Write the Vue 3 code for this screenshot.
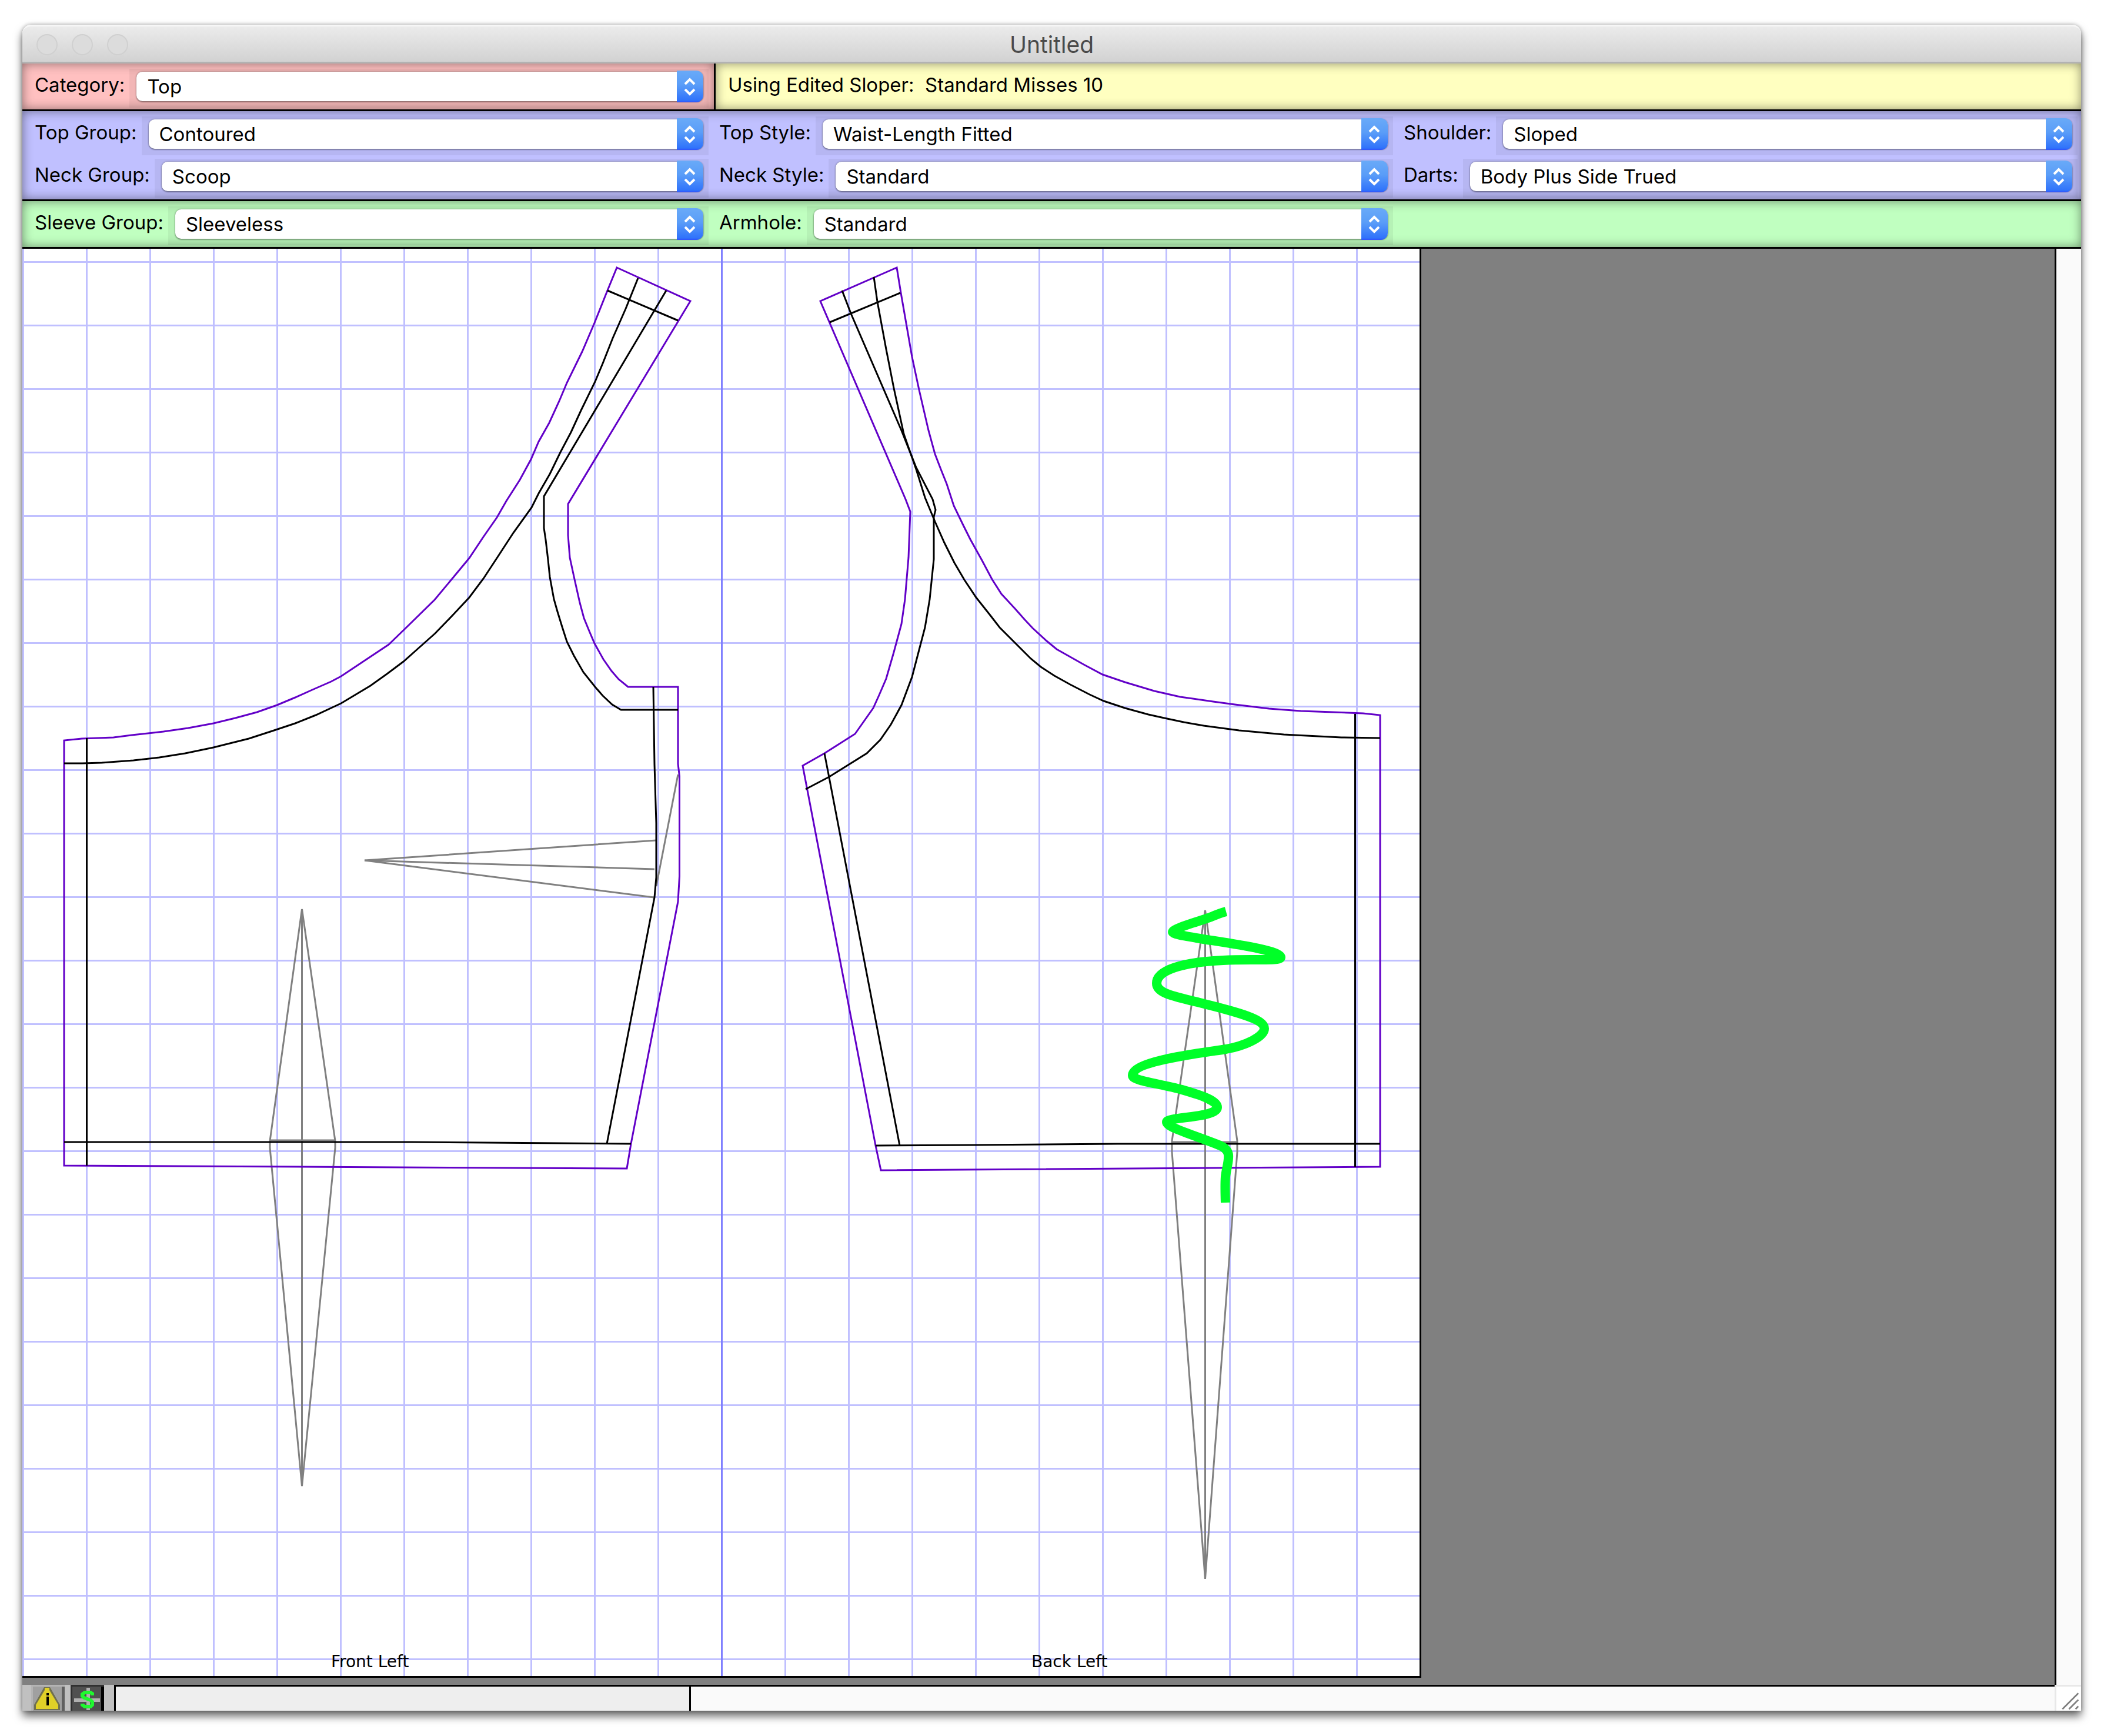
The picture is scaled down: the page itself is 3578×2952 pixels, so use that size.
<script setup>
import { reactive } from 'vue'

const category = reactive({ id: 'category', label: 'Category:', value: 'Top' })

const bodyMenus = reactive([
  { id: 'top-group', label: 'Top Group:', value: 'Contoured' },
  { id: 'top-style', label: 'Top Style:', value: 'Waist-Length Fitted' },
  { id: 'shoulder', label: 'Shoulder:', value: 'Sloped' },
  { id: 'neck-group', label: 'Neck Group:', value: 'Scoop' },
  { id: 'neck-style', label: 'Neck Style:', value: 'Standard' },
  { id: 'darts', label: 'Darts:', value: 'Body Plus Side Trued' }
])

const sleeveMenus = reactive([
  { id: 'sleeve-group', label: 'Sleeve Group:', value: 'Sleeveless' },
  { id: 'armhole', label: 'Armhole:', value: 'Standard' }
])

const bands = [
  { name: 'body', menus: bodyMenus },
  { name: 'sleeve', menus: sleeveMenus }
]

const columns = Array.from({ length: 22 }, (_, i) => 39.5 + i * 108)
const rows = Array.from({ length: 23 }, (_, i) => 445.5 + i * 108)

// Cutting lines, seam allowance included
const cutting = [
  '1049,455 1174,512 966,857 966,910 969,948 977,985 986,1025 993,1051 1002,1073 1011,1094 1026,1121 1040,1141 1052,1155 1068,1168 1153,1168 1153,1299 1155.5,1320 1155.5,1490 1153,1533 1073,1945 1066,1987 109,1982 109,1259 139,1256 193,1254 224,1250 278,1244 320,1238 363,1230 400,1221 437,1211 471,1199 502,1186 531,1173 563,1159 580,1150 616,1126 661,1096 691,1067 739,1020 769,984 798,949 822,913 845,880 861,852 884,816 903,781 916,751 934,719 951,682 964,651 990,598 1011,549 1033,494',
  '1395,512 1525,455 1532,498 1551,607 1563,663 1579,732 1590,772 1600,798 1610,823 1622,860 1638,893 1650,917 1670,953 1687,985 1703,1010 1727,1036 1742,1053 1756,1068 1780,1090 1797,1104 1820,1117 1843,1130 1875,1147 1913,1160 1963,1175 2007,1185 2063,1193 2100,1198 2158,1205 2212,1209 2318,1213 2347,1216 2347,1984 1498,1990 1489,1948 1365,1302 1402,1281 1454,1248 1485,1204 1495,1182 1507,1154 1520,1109 1533,1061 1539,1019 1545,948 1548,870 1540,849'
]

// Stitching lines
const stitching = [
  '1085,473 1064,525 1042,575 1025,618 1012,649 988,698 971,735 953,769 935,806 916,839 904,863 873,906 845,949 822,984 798,1016 769,1047 740,1077 713,1101 686,1125 658,1146 630,1166 580,1196 537,1216 502,1230 463,1243 423,1256 363,1271 315,1281 271,1288 227,1293 173,1297 140,1298 109,1298',
  '1133,494 925,844 925,898 928,918 932,952 935,981 942,1019 948,1040 956,1066 964,1091 976,1115 992,1143 1012,1168 1025,1183 1041,1198 1056,1207 1153,1207',
  '1033,494 1153,545',
  '1111,1168 1113,1300 1116,1400 1116,1492 1113,1526 1032,1945',
  '109,1942 700,1942 1073,1945',
  '147.5,1255 147.5,1982',
  '1486,471 1492,513 1507,594 1520,660 1537,738 1558,798 1573,846 1590,887 1606,923 1623,957 1640,986 1660,1016 1683,1045 1700,1067 1727,1094 1753,1120 1770,1134 1793,1149 1820,1164 1853,1181 1877,1192 1913,1204 1953,1215 1980,1221 2013,1228 2047,1234 2107,1242 2183,1249 2281,1254 2347,1255',
  '1432,494 1447,533 1533,732 1558,795 1586,849 1591,867 1588,879 1588,951 1581,1019 1573,1067 1551,1151 1533,1199 1515,1232 1497,1258 1474,1281 1410,1321 1370,1342',
  '1411,548 1531,498',
  '1402,1281 1410,1322 1530,1948',
  '1489,1948 1660,1947 1900,1945 2347,1945',
  '2304.5,1214 2304.5,1984'
]

const darts = [
  '1116,1429 620,1463 1113,1478',
  '620,1463 1112,1526',
  '1153,1317 1116,1507',
  '513.5,1546 459,1940 459,1952 513.5,2527 570,1952 570,1940 513.5,1546 513.5,2527',
  '459,1939 570,1939',
  '2049.5,1548 1993,1940 1993,1959 2049.5,2685 2104,1959 2104,1940 2049.5,1548 2049.5,2685',
  '1993,1942 2104,1942'
]

const scribble =
  'M2085 1550 C2074 1553 2067 1556 2060 1559 C2035 1568 1994 1579 1994 1585 C1994 1594 2178 1610 2178 1628 C2178 1635 2130 1630 2080 1633 C2010 1636 1967 1650 1967 1672 C1967 1690 2000 1695 2040 1705 C2090 1718 2150 1731 2150 1749 C2150 1763 2118 1778 2085 1784 C2040 1791 1926 1804 1926 1829 C1926 1838 1975 1843 2010 1853 C2045 1863 2070 1872 2070 1883 C2070 1901 1984 1899 1984 1908 C1984 1917 2030 1930 2075 1948 C2098 1958 2087 1975 2084 2001 Q2083 2015 2084 2045'
</script>

<template>
  <main class="window">
    <header class="titlebar">
      <div class="lights">
        <button class="light" type="button" aria-label="Close"></button>
        <button class="light" type="button" aria-label="Minimize"></button>
        <button class="light" type="button" aria-label="Zoom"></button>
      </div>
      <h1 class="title">Untitled</h1>
    </header>

    <section class="top-band">
      <div class="panel category">
        <div class="field">
          <label class="label" :for="category.id">{{ category.label }}</label>
          <div class="shade">
            <div class="popup">
              <select :id="category.id" v-model="category.value" class="select">
                <option>{{ category.value }}</option>
              </select>
              <svg class="cap" viewBox="0 0 45 54" aria-hidden="true">
                <path d="M14 23 L22 15 L30 23 M14 32 L22 40 L30 32" />
              </svg>
            </div>
          </div>
        </div>
      </div>
      <div class="panel sloper">
        <p class="status-text">Using Edited Sloper:&nbsp; Standard Misses 10</p>
      </div>
    </section>

    <section v-for="band in bands" :key="band.name" class="panel band" :class="band.name">
      <div v-for="menu in band.menus" :key="menu.id" class="field">
        <label class="label" :for="menu.id">{{ menu.label }}</label>
        <div class="shade">
          <div class="popup">
            <select :id="menu.id" v-model="menu.value" class="select">
              <option>{{ menu.value }}</option>
            </select>
            <svg class="cap" viewBox="0 0 45 54" aria-hidden="true">
              <path d="M14 23 L22 15 L30 23 M14 32 L22 40 L30 32" />
            </svg>
          </div>
        </div>
      </div>
    </section>

    <div class="work">
      <div class="desk">
        <svg class="paper" viewBox="38 423 2376 2427" role="img" aria-label="Sewing pattern">
          <g class="grid">
            <line v-for="x in columns" :key="'c' + x" :x1="x" :x2="x" y1="423" y2="2850" />
            <line v-for="y in rows" :key="'r' + y" x1="38" x2="2414" :y1="y" :y2="y" />
            <line class="center" x1="1227.5" x2="1227.5" y1="423" y2="2850" />
          </g>
          <g class="dart"><polyline v-for="p in darts" :key="p" :points="p" /></g>
          <g class="cut"><polygon v-for="p in cutting" :key="p" :points="p" /></g>
          <g class="stitch"><polyline v-for="p in stitching" :key="p" :points="p" /></g>
          <path class="scribble" :d="scribble" />
          <text class="caption" x="563" y="2835">Front Left</text>
          <text class="caption" x="1754" y="2835">Back Left</text>
        </svg>
      </div>
      <div class="vscroll"></div>
    </div>

    <footer class="statusbar">
      <div class="tools">
        <button class="tool warn" type="button" aria-label="Warnings">
          <svg viewBox="0 0 57 42" aria-hidden="true">
            <path class="sign-edge" d="M22 3 H32 L49 33 V42 H5 V33 Z" />
            <path class="sign" d="M23 4 H31 V8 L46 33 V40 H8 V33 L23 8 Z" />
            <path d="M26 13 h4 v4 h-4 z M26 19 h4 v15 h-4 z" />
          </svg>
        </button>
        <button class="tool money" type="button" aria-label="Alignment">
          <svg viewBox="0 0 57 42" aria-hidden="true">
            <path class="bars" d="M27 4 h6 v38 h-6 z M6 22 h44 v6 h-44 z" />
            <path class="dollar" d="M37 17 V14 L34 12 H24 L20 15 V18 L23 21 L34 25 L37 28 V33 L34 36 H24 L20 33 V31" />
          </svg>
        </button>
      </div>
      <div class="message"></div>
      <div class="hscroll"></div>
      <svg class="grip" viewBox="0 0 45 44" aria-hidden="true">
        <path d="M11 41 L40 12 M23 41 L40 24 M35 41 L40 36" />
      </svg>
    </footer>
  </main>
</template>

<style>
body {
  margin: 0;
  background: #fff;
}
</style>

<style scoped>
.window {
  margin: 42px 39px 43px 38px;
  display: flex;
  flex-direction: column;
  border-radius: 15px 15px 0 0;
  box-shadow: 0 9px 15px rgba(0, 0, 0, 0.6), 0 0 6px rgba(0, 0, 0, 0.3);
  font-family: Inter, "Noto Sans", sans-serif;
  font-size: 33px;
  color: #000;
}

.titlebar {
  display: grid;
  grid-template-columns: 1fr auto 1fr;
  align-items: center;
  height: 66px;
  box-sizing: border-box;
  padding-top: 2px;
  border-top: 3px solid #f6f6f6;
  border-bottom: 3px solid #b2b2b2;
  border-radius: 15px 15px 0 0;
  background: linear-gradient(#ebebeb, #d2d2d2);
}

.lights {
  display: flex;
  gap: 24px;
  padding-left: 24px;
}

.light {
  width: 36px;
  height: 36px;
  padding: 0;
  border: 2px solid #d0d0d0;
  border-radius: 50%;
  background: #dcdcdc;
}

.title {
  margin: 0;
  font-size: 39px;
  font-weight: 400;
  line-height: 54px;
  color: #4a4a4a;
}

.panel {
  border-bottom: 3px solid #000;
  box-shadow: inset 0 0 18px rgba(0, 0, 0, 0.45);
}

.top-band {
  display: grid;
  grid-template-columns: calc((100% - 9px) / 3 + 15px) 1fr;
}

.category {
  padding: 9px 9px 3px 3px;
  border-right: 3px solid #000;
  background: #ffc0c0;
}

.sloper {
  padding: 9px 21px 3px;
  background: #ffffc0;
}

.status-text {
  margin: 0;
  line-height: 54px;
}

.band {
  display: grid;
  grid-template-columns: repeat(3, minmax(0, 1fr));
  row-gap: 6px;
  padding: 9px 6px 3px 3px;
}

.body {
  background: #c0c0ff;
}

.sleeve {
  background: #c0ffc0;
}

.field {
  display: flex;
  padding-left: 18px;
}

.label {
  margin-right: 8px;
  line-height: 54px;
  white-space: nowrap;
}

.shade {
  flex: 1;
  min-width: 0;
  padding: 3px 9px 9px 12px;
  background: rgba(0, 0, 0, 0.05);
}

.popup {
  position: relative;
  display: flex;
  align-items: center;
  height: 54px;
}

.select {
  appearance: none;
  width: 100%;
  height: 50px;
  padding: 0 57px 0 18px;
  border: 0;
  border-radius: 10px;
  background: #fff;
  box-shadow: 0 0 3px rgba(0, 0, 0, 0.45), 0 2px 2px rgba(0, 0, 0, 0.25);
  font: inherit;
  color: #000;
}

.cap {
  position: absolute;
  top: 0;
  right: 0;
  width: 45px;
  height: 54px;
  border-radius: 0 12px 12px 0;
  background: linear-gradient(#69aaf8, #5a9df8 45%, #3073fb 94%, #3050fb);
  pointer-events: none;
}

.cap path {
  fill: none;
  stroke: #fff;
  stroke-width: 4;
}

.work {
  display: flex;
}

.desk {
  flex: 1;
  min-width: 0;
  overflow: hidden;
  padding-bottom: 12px;
  background: #808080;
}

.paper {
  display: block;
  width: 2376px;
  height: 2427px;
  border: solid #000;
  border-width: 0 3px 3px 0;
  background: #fff;
}

.vscroll {
  width: 42px;
  border-left: 3px solid #000;
  background: #fafafa;
}

.grid line {
  stroke: #c0c0ff;
  stroke-width: 3;
}

.grid .center {
  stroke: #8080ff;
}

.cut,
.stitch,
.dart {
  fill: none;
  stroke-width: 3;
}

.cut {
  stroke: #6200c8;
}

.stitch {
  stroke: #000;
}

.dart {
  stroke: #808080;
}

.scribble {
  fill: none;
  stroke: #00ff28;
  stroke-width: 16;
}

.caption {
  font-family: "DejaVu Sans", sans-serif;
  font-size: 28px;
  fill: #000;
}

.statusbar {
  display: flex;
  height: 44px;
}

.tools {
  display: flex;
  gap: 10px;
  width: 156px;
  box-sizing: border-box;
  padding-left: 15px;
  background: #c0c0c0;
}

.tool {
  width: 57px;
  height: 44px;
  padding: 0;
  border: 0;
}

.tool svg {
  display: block;
  width: 57px;
  height: 42px;
}

.warn {
  background: #a0a0a0;
  box-shadow: inset 3px 3px #b4b4b4, inset -5px 0 #606060;
}

.money {
  background: #505050;
  box-shadow: inset 3px 3px #303030, inset -5px 0 #000;
}

.sign {
  fill: #e0d028;
}

.sign-edge {
  fill: #707050;
}

.bars {
  fill: #b0b0b0;
}

.dollar {
  fill: none;
  stroke: #20f830;
  stroke-width: 6;
}

.message {
  flex: 0 1 975px;
  border: solid #000;
  border-width: 3px 3px 0;
  background: #eee;
}

.hscroll {
  flex: 1;
  border-top: 3px solid #000;
  background: #fafafa;
}

.grip {
  width: 45px;
  height: 44px;
  box-sizing: border-box;
  border-left: 3px solid #e8e8e8;
  border-top: 3px solid #e8e8e8;
  background: #fff;
}

.grip path {
  fill: none;
  stroke: #808080;
  stroke-width: 3;
}
</style>
